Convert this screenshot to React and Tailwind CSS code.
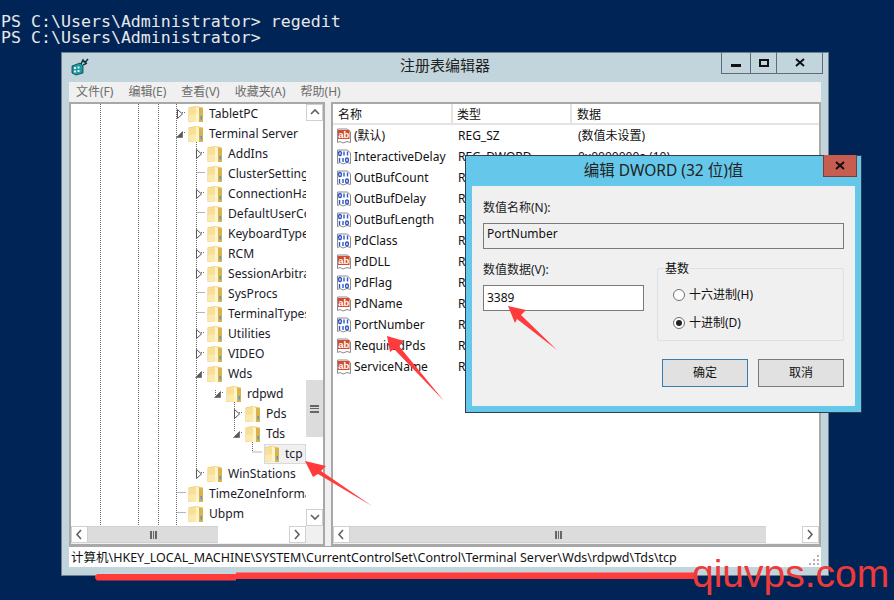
const treeRows = [
  { name: 'TabletPC', depth: 0, mark: 'closed' },
  { name: 'Terminal Server', depth: 0, mark: 'open' },
  { name: 'AddIns', depth: 1, mark: 'closed' },
  { name: 'ClusterSettings', depth: 1 },
  { name: 'ConnectionHandler', depth: 1, mark: 'closed' },
  { name: 'DefaultUserConfiguration', depth: 1 },
  { name: 'KeyboardType Mapping', depth: 1, mark: 'closed' },
  { name: 'RCM', depth: 1, mark: 'closed' },
  { name: 'SessionArbitrationHelper', depth: 1, mark: 'closed' },
  { name: 'SysProcs', depth: 1 },
  { name: 'TerminalTypes', depth: 1 },
  { name: 'Utilities', depth: 1, mark: 'closed' },
  { name: 'VIDEO', depth: 1, mark: 'closed' },
  { name: 'Wds', depth: 1, mark: 'open' },
  { name: 'rdpwd', depth: 2, mark: 'open' },
  { name: 'Pds', depth: 3, mark: 'closed' },
  { name: 'Tds', depth: 3, mark: 'open' },
  { name: 'tcp', depth: 4, selected: true },
  { name: 'WinStations', depth: 1, mark: 'closed' },
  { name: 'TimeZoneInformation', depth: 0 },
  { name: 'Ubpm', depth: 0 },
  { name: 'WaitForChain', depth: 0 },
];

const indent = ['pl-[105px]', 'pl-[124px]', 'pl-[143px]', 'pl-[162px]', 'pl-[181px]'];

const values = [
  { name: '(默认)', kind: 'ab', type: 'REG_SZ', data: '(数值未设置)' },
  { name: 'InteractiveDelay', kind: 'bin', type: 'REG_DWORD', data: '0x0000000a (10)' },
  { name: 'OutBufCount', kind: 'bin', type: 'REG_DWORD', data: '0x00000006 (6)' },
  { name: 'OutBufDelay', kind: 'bin', type: 'REG_DWORD', data: '0x00000064 (100)' },
  { name: 'OutBufLength', kind: 'bin', type: 'REG_DWORD', data: '0x00000212 (530)' },
  { name: 'PdClass', kind: 'bin', type: 'REG_DWORD', data: '0x00000002 (2)' },
  { name: 'PdDLL', kind: 'ab', type: 'REG_SZ', data: 'tdtcp' },
  { name: 'PdFlag', kind: 'bin', type: 'REG_DWORD', data: '0x0000004e (78)' },
  { name: 'PdName', kind: 'ab', type: 'REG_SZ', data: 'tcp' },
  { name: 'PortNumber', kind: 'bin', type: 'REG_DWORD', data: '0x00000d3d (3389)' },
  { name: 'RequiredPds', kind: 'ab', type: 'REG_MULTI_SZ', data: 'tssecsrv' },
  { name: 'ServiceName', kind: 'ab', type: 'REG_SZ', data: 'tcpip' },
];

function Folder() {
  return (
    <svg width="16" height="18" viewBox="0 0 16 18" className="shrink-0">
      <path d="M0.5 2.5 L8 1 L15 2.5 V17 H0.5 Z" fill="#ecc968" />
      <path d="M1 3 L8 1.5 V16 L1 16.5 Z" fill="#f7df95" />
      <path d="M1 10 L8 9 V16 L1 16.5 Z" fill="#fbe9ae" />
      <path d="M8 1 L11 3 V17 H1.5 L8 16 Z" fill="#fff3c9" />
      <path d="M11 3 L15 3.5 V17 H11 Z" fill="#d8b24c" />
      <rect x="12.5" y="11" width="1.5" height="3.5" fill="#3f9fe0" />
    </svg>
  );
}

function Expander({ mark }) {
  if (mark === 'closed') {
    return (
      <svg width="12" height="12" viewBox="0 0 12 12" className="shrink-0">
        <path d="M1.5 1.5 L6.5 6 L1.5 10.5 Z" fill="#fff" stroke="#555" />
      </svg>
    );
  }
  if (mark === 'open') {
    return (
      <svg width="12" height="12" viewBox="0 0 12 12" className="shrink-0">
        <path d="M0.5 9.5 H6.5 V3.5 Z" fill="#595959" stroke="#595959" strokeWidth="0.6" />
      </svg>
    );
  }
  return <span className="w-[12px] shrink-0" />;
}

function ValueIcon({ kind }) {
  return (
    <svg width="16" height="16" viewBox="0 0 16 16" className="shrink-0">
      <path d="M1.5 1 H11.5 L14.5 4 V14.5 L11 13.5 L7 15 L4 13.5 L1.5 14.5 Z" fill="#fff" stroke="#8c8c8c" />
      {kind === 'ab' ? (
        <>
          <rect x="2" y="2" width="11.5" height="9" fill="#d8482a" />
          <text x="7.7" y="9.6" textAnchor="middle" fontSize="9.5" fontWeight="700" fill="#fff" fontFamily="Liberation Sans, sans-serif">ab</text>
        </>
      ) : (
        <g fill="none" stroke="#2f55c8" strokeWidth="1.4">
          <ellipse cx="4" cy="4.5" rx="1.4" ry="2" />
          <path d="M8 2.5 V6.5 M11.5 2.5 V6.5" />
          <path d="M3.5 9 V13" />
          <path d="M7 9 V13" />
          <ellipse cx="11" cy="11" rx="1.4" ry="2" />
        </g>
      )}
    </svg>
  );
}

function Chevron({ dir }) {
  const paths = {
    up: 'M2 7 L6 3 L10 7',
    down: 'M2 3 L6 7 L10 3',
    left: 'M7 1 L3 5.5 L7 10',
    right: 'M3 1 L7 5.5 L3 10',
  };
  return (
    <svg width="12" height="11" viewBox="0 0 12 11">
      <path d={paths[dir]} fill="none" stroke="#606060" strokeWidth="1.6" />
    </svg>
  );
}

function ScrollButton({ dir }) {
  return (
    <div className="flex h-full w-[17px] shrink-0 items-center justify-center border border-[#d0d0d0] bg-white">
      <Chevron dir={dir} />
    </div>
  );
}

function HScroll({ thumb, rest }) {
  return (
    <div className="flex h-[17px] items-stretch bg-white">
      <ScrollButton dir="left" />
      <div className={`flex items-center justify-center bg-[#dcdcdc] border-y border-[#d0d0d0] ${thumb}`}>
        <div className="h-[8px] w-[7px] border-x-2 border-[#666] flex justify-center">
          <div className="w-[1px] bg-[#666]" />
        </div>
      </div>
      <div className={rest} />
      <ScrollButton dir="right" />
    </div>
  );
}

function TreePane() {
  return (
    <div className="flex h-full w-[256px] shrink-0 flex-col border-2 border-[#a8a8a8] bg-white">
      <div className="flex min-h-0 flex-1">
        <div className="relative min-w-0 flex-1 overflow-hidden text-[12.1px]">
          <svg width="240" height="425" className="absolute left-0 top-0" fill="none" stroke="#6a6a6a" strokeDasharray="1 1">
            <path d="M29.5 0 V425 M67.5 0 V425 M87.5 0 V425 M105.5 0 V425 M125.5 38 V367 M144.5 286 V292 M163.5 298 V328 M181.5 338 V348 H191" />
            <path d="M125.5 68.5 H134 M125.5 108.5 H134 M125.5 188.5 H134 M125.5 208.5 H134 M105.5 388.5 H115 M105.5 408.5 H115" />
            <path d="M111 8.5 H115 M111 28.5 H115 M130 48.5 H134 M130 88.5 H134 M130 128.5 H134 M130 148.5 H134 M130 168.5 H134 M130 228.5 H134 M130 248.5 H134 M130 268.5 H134 M149 288.5 H153 M168 308.5 H172 M168 328.5 H172 M130 368.5 H134" />
          </svg>
          {treeRows.map((row) => (
            <div key={row.name} className={`relative flex h-[20px] items-center whitespace-nowrap ${indent[row.depth]}`}>
              <Expander mark={row.mark} />
              <div className={`flex h-[20px] items-center ${row.selected ? 'bg-[#f0f0f0] outline outline-1 -outline-offset-1 outline-[#d9d9d9]' : ''}`}>
                <Folder />
                <span className="ml-[5px] pr-[3px] leading-[20px] text-[#1a1a2a]">{row.name}</span>
              </div>
            </div>
          ))}
        </div>
        <div className="flex w-[17px] shrink-0 flex-col bg-white">
          <div className="flex h-[17px] items-center justify-center border border-[#d0d0d0]"><Chevron dir="up" /></div>
          <div className="h-[259px]" />
          <div className="flex h-[57px] items-center justify-center bg-[#dcdcdc]">
            <div className="flex h-[8px] w-[9px] flex-col justify-between">
              <div className="h-[2px] bg-[#666]" />
              <div className="h-[1px] bg-[#666]" />
              <div className="h-[2px] bg-[#666]" />
            </div>
          </div>
          <div className="flex-1" />
          <div className="flex h-[17px] items-center justify-center border border-[#d0d0d0]"><Chevron dir="down" /></div>
        </div>
      </div>
      <div className="flex">
        <div className="min-w-0 flex-1"><HScroll thumb="w-[130px]" rest="flex-1" /></div>
        <div className="w-[17px] shrink-0 bg-[#f0f0f0]" />
      </div>
      <div className="h-[1px] bg-[#f0f0f0]" />
    </div>
  );
}

function ListPane() {
  return (
    <div className="ml-[6px] flex h-full min-w-0 flex-1 flex-col border-2 border-[#a8a8a8] bg-white">
      <div className="flex h-[21px] shrink-0 border-b-2 border-[#e3e3e3] leading-[22px]">
        <div className="w-[120px] border-r-2 border-[#e3e3e3] pl-[5px]">名称</div>
        <div className="w-[119px] border-r-2 border-[#e3e3e3] pl-[4px]">类型</div>
        <div className="pl-[5px]">数据</div>
      </div>
      <div className="min-h-0 flex-1 overflow-hidden">
        {values.map((v) => (
          <div key={v.name} className="flex h-[21px] items-center whitespace-nowrap">
            <div className="flex w-[120px] items-center pl-[3px]">
              <ValueIcon kind={v.kind} />
              <span className="ml-[2px]">{v.name}</span>
            </div>
            <div className="w-[119px] pl-[5px]">{v.type}</div>
            <div className="pl-[6px]">{v.data}</div>
          </div>
        ))}
      </div>
      <HScroll thumb="w-[416px]" rest="w-[36px]" />
      <div className="h-[1px] bg-[#f0f0f0]" />
    </div>
  );
}

function RegistryWindow() {
  return (
    <div className="absolute left-[61px] top-[52px] flex h-[524px] w-[768px] flex-col border border-[#6d7f8b] bg-[#c2d5dc] px-[7px] pb-[8px]">
      <div className="relative flex h-[29px] shrink-0 items-center justify-center pb-[5px]">
        <svg width="18" height="18" viewBox="0 0 18 18" className="absolute left-[2px] top-[5px]">
          <path d="M1 8 L9 5 L12 8 V15 L5 17 L1 15 Z" fill="#1d9aa6" stroke="#0c3b44" strokeWidth="0.8" />
          <path d="M3 9 H5 V11 H3 Z M6.5 8.5 H8.5 V10.5 H6.5 Z M3 12.5 H5 V14.5 H3 Z M6.5 12 H8.5 V14 H6.5 Z" fill="#dff6f6" />
          <path d="M10 6 L12 2 L14 4.5 L17 1 M12 7 L16 5" fill="none" stroke="#0c3b44" strokeWidth="1.6" />
        </svg>
        <span className="text-[15px] text-[#222]">注册表编辑器</span>
        <div className="absolute right-[-2px] top-[-1px] flex h-[22px] border border-t-0 border-[#5c6c78]">
          <div className="flex w-[28px] items-center justify-center pt-[5px]"><div className="h-[3px] w-[10px] bg-[#111]" /></div>
          <div className="flex w-[26px] items-center justify-center border-l border-[#5c6c78]"><div className="h-[8px] w-[10px] border-2 border-[#111]" /></div>
          <div className="flex w-[46px] items-center justify-center border-l border-[#5c6c78]">
            <svg width="10" height="9" viewBox="0 0 10 9"><path d="M1 1 L9 8 M9 1 L1 8" stroke="#111" strokeWidth="2" /></svg>
          </div>
        </div>
      </div>
      <div className="flex h-[20px] shrink-0 items-center gap-[15px] bg-[#f0f0f0] pl-[7px] text-[#6d6d6d]">
        <span>文件(F)</span>
        <span>编辑(E)</span>
        <span>查看(V)</span>
        <span>收藏夹(A)</span>
        <span>帮助(H)</span>
      </div>
      <div className="flex min-h-0 flex-1 bg-[#f0f0f0]">
        <TreePane />
        <ListPane />
      </div>
      <div className="relative flex h-[21px] shrink-0 items-center border-t border-[#a8a8a8] bg-white pl-[2px] pt-[3px] text-[12.5px] whitespace-nowrap">
        计算机\HKEY_LOCAL_MACHINE\SYSTEM\CurrentControlSet\Control\Terminal Server\Wds\rdpwd\Tds\tcp
        <svg width="12" height="12" viewBox="0 0 12 12" className="absolute bottom-[1px] right-[1px]" fill="#b4b4b4">
          <rect x="9" y="1" width="2" height="2" />
          <rect x="5" y="5" width="2" height="2" />
          <rect x="9" y="5" width="2" height="2" />
          <rect x="1" y="9" width="2" height="2" />
          <rect x="5" y="9" width="2" height="2" />
          <rect x="9" y="9" width="2" height="2" />
        </svg>
      </div>
    </div>
  );
}

function Radio({ checked, label }) {
  return (
    <div className="flex h-[20px] items-center gap-[4px]">
      <div className="flex h-[12px] w-[12px] items-center justify-center rounded-full border border-[#6f6f6f] bg-white">
        {checked && <div className="h-[6px] w-[6px] rounded-full bg-[#222]" />}
      </div>
      <span>{label}</span>
    </div>
  );
}

function EditDialog() {
  return (
    <div className="absolute left-[465px] top-[155px] flex h-[258px] w-[397px] flex-col border border-[#2d3f4e] bg-[#65c8eb] px-[6px] pb-[6px]">
      <div className="relative flex h-[30px] shrink-0 items-center justify-center text-[15.5px] text-[#222]">
        编辑 DWORD (32 位)值
        <div className="absolute right-[-2px] top-[-1px] flex h-[22px] w-[34px] items-center justify-center border border-t-0 border-[#7d3a33] bg-[#c75c50]">
          <svg width="10" height="9" viewBox="0 0 10 9"><path d="M1 1 L9 8 M9 1 L1 8" stroke="#111" strokeWidth="2" /></svg>
        </div>
      </div>
      <div className="flex min-h-0 flex-1 flex-col bg-[#f0f0f0] px-[11px] pt-[13px]">
        <div className="h-[18px] leading-[18px] text-[#222]">数值名称(N):</div>
        <div className="mt-[6px] flex h-[26px] items-center border border-[#7a7a7a] pb-[4px] pl-[3px]">PortNumber</div>
        <div className="mt-[12px] flex">
          <div className="w-[161px] shrink-0">
            <div className="h-[18px] leading-[18px] text-[#222]">数值数据(V):</div>
            <div className="mt-[6px] flex h-[26px] items-center border border-[#7a7a7a] bg-white pl-[3px]">3389</div>
          </div>
          <div className="relative ml-[13px] mt-[7px] flex h-[73px] flex-1 flex-col justify-center gap-[8px] rounded-[2px] border border-[#d9e2ea] pl-[15px] pt-[8px]">
            <span className="absolute left-[6px] top-[-9px] bg-[#f0f0f0] px-[1px] leading-[18px]">基数</span>
            <Radio label="十六进制(H)" />
            <Radio checked label="十进制(D)" />
          </div>
        </div>
        <div className="mt-[18px] flex justify-end gap-[10px]">
          <div className="flex h-[28px] w-[86px] items-center justify-center border border-[#3a7cae] bg-[#e1e1e1]">确定</div>
          <div className="flex h-[28px] w-[86px] items-center justify-center border border-[#7a7a7a] bg-[#e1e1e1]">取消</div>
        </div>
      </div>
    </div>
  );
}

function Annotations() {
  return (
    <svg width="894" height="600" className="pointer-events-none absolute left-0 top-0" fill="#ff3b3b">
      <path d="M305 461 L326 466 L321 471 L372 506 L318 474 L313 477 Z" />
      <path d="M387 336 L404 341 L399 346 L444 401 L394 349 L390 352 Z" />
      <path d="M508 306 L526 310 L521 315 L557 350 L517 319 L515 323 Z" />
      <path d="M97 574 H236 V572.5 H695 V579 H236 V580.5 H97 Q93 577 97 574 Z" />
    </svg>
  );
}

export default function App() {
  return (
    <div className="relative h-[600px] w-[894px] overflow-hidden bg-[#012456] font-['Noto_Sans','Noto_Sans_CJK_SC',sans-serif] text-[12px] text-[#111]">
      <div className="pl-[1px] pt-[14px] font-['DejaVu_Sans_Mono',monospace] text-[16.6px] leading-[16px] whitespace-pre text-[#e8e8e8]">
        <div>PS C:\Users\Administrator&gt; regedit</div>
        <div>PS C:\Users\Administrator&gt;</div>
      </div>
      <RegistryWindow />
      <EditDialog />
      <Annotations />
      <div className="absolute left-[692px] top-[554px] font-['Liberation_Sans',sans-serif] text-[39px] leading-[39px] text-[#ef3a3a]">qiuvps.com</div>
    </div>
  );
}
